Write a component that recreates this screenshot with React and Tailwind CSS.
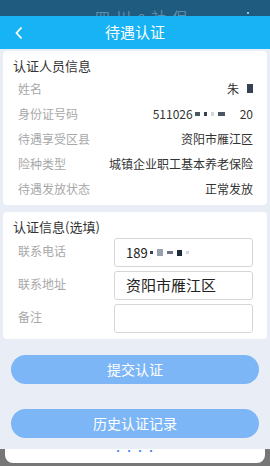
import React from 'react'

const font = { fontFamily: '"Noto Sans CJK SC", "Noto Sans", sans-serif' }

const rows = [
  ['姓名', 'name'],
  ['身份证号码', 'id'],
  ['待遇享受区县', '资阳市雁江区'],
  ['险种类型', '城镇企业职工基本养老保险'],
  ['待遇发放状态', '正常发放'],
]

function Blur({ w, h = 'h-[4px]', c = 'bg-gray-500' }) {
  return <span className={`inline-block ${w} ${h} ${c} mx-[2px] align-middle`} />
}

function Value({ k, v }) {
  if (k === 'name')
    return (
      <span className="flex items-center gap-[8px]">
        朱<span className="inline-block w-[6px] h-[9px] bg-gray-700" />
      </span>
    )
  if (k === 'id')
    return (
      <span className="flex items-center">
        511026
        <Blur w="w-[5px]" c="bg-gray-600" />
        <Blur w="w-[3px]" c="bg-gray-700" />
        <Blur w="w-[3px]" c="bg-gray-300" />
        <Blur w="w-[7px]" c="bg-gray-600" />
        <span className="ml-[13px]">20</span>
      </span>
    )
  return <span>{v}</span>
}

export default function App() {
  return (
    <div className="w-[270px] h-[466px] overflow-hidden bg-[#e9eef6] flex flex-col" style={font}>
      <div className="h-[16px] bg-[#1f5a7f] relative overflow-hidden">
        <div className="absolute left-[95px] top-[9px] h-[7px] overflow-hidden">
          <span className="block text-[15px] text-[#5f8fab] leading-[15px] tracking-[6px]">四川e社保</span>
        </div>
        <span className="absolute left-[247px] top-[12px] w-[2px] h-[2px] bg-[#9bbbd0]" />
      </div>
      <div className="h-[33px] bg-[#17b3f4] flex items-center relative">
        <svg className="absolute left-[14px] top-[10px]" width="10" height="14" viewBox="0 0 10 14">
          <path d="M7.5 1.5 L2.5 7 L7.5 12.5" stroke="white" strokeWidth="1.8" fill="none" />
        </svg>
        <span className="w-full text-center text-white text-[15px]">待遇认证</span>
      </div>

      <div className="mt-[2px] mx-[3px] bg-white rounded-[4px] pt-[5px] pb-[4px]">
        <div className="px-[10px] text-[13px] text-[#333] h-[20px] leading-[20px]">认证人员信息</div>
        {rows.map(([label, v], i) => (
          <div key={i} className="flex items-center justify-between h-[25px] pl-[15px] pr-[14px] text-[12px]">
            <span className="text-[#a8a8a8]">{label}</span>
            <span className="text-[#333]">
              <Value k={v} v={v} />
            </span>
          </div>
        ))}
      </div>

      <div className="mt-[7px] mx-[3px] bg-white rounded-[4px] pt-[5px] pb-[6px]">
        <div className="px-[10px] text-[13px] text-[#333] h-[20px] leading-[20px]">认证信息(选填)</div>
        <div className="flex flex-col gap-[4px] mt-[1px]">
          {[
            ['联系电话', 'phone'],
            ['联系地址', '资阳市雁江区'],
            ['备注', ''],
          ].map(([label, v], i) => (
            <div key={i} className="flex items-start pl-[15px] pr-[14px]">
              <span className="w-[96px] text-[12px] text-[#a8a8a8] pt-[4px]">{label}</span>
              <div className="flex-1 h-[29px] border border-[#d6d6d6] rounded-[3px] flex items-center px-[11px] text-[#222]">
                {v === 'phone' ? (
                  <span className="flex items-center text-[13px]">
                    189
                    <Blur w="w-[3px]" h="h-[3px]" c="bg-gray-700" />
                    <Blur w="w-[6px]" h="h-[7px]" c="bg-gray-400" />
                    <Blur w="w-[6px]" h="h-[3px]" c="bg-gray-500" />
                    <Blur w="w-[5px]" h="h-[6px]" c="bg-gray-800" />
                    <Blur w="w-[3px]" h="h-[3px]" c="bg-gray-300" />
                  </span>
                ) : (
                  <span className="text-[15px]">{v}</span>
                )}
              </div>
            </div>
          ))}
        </div>
      </div>

      <div className="px-[11px] mt-[16px] flex flex-col gap-[25px]">
        <button className="h-[29px] rounded-full bg-[#7db6f6] text-white text-[14px]">提交认证</button>
        <button className="h-[29px] rounded-full bg-[#7db6f6] text-white text-[14px]">历史认证记录</button>
      </div>

      <div className="mt-auto h-[17px] bg-[#777] px-[5px] pb-[3px]">
        <div className="h-full bg-white rounded-b-[8px] flex justify-center">
          <span className="text-[#3b82f6] text-[10px] leading-[4px] tracking-[1px]">····</span>
        </div>
      </div>
    </div>
  )
}
